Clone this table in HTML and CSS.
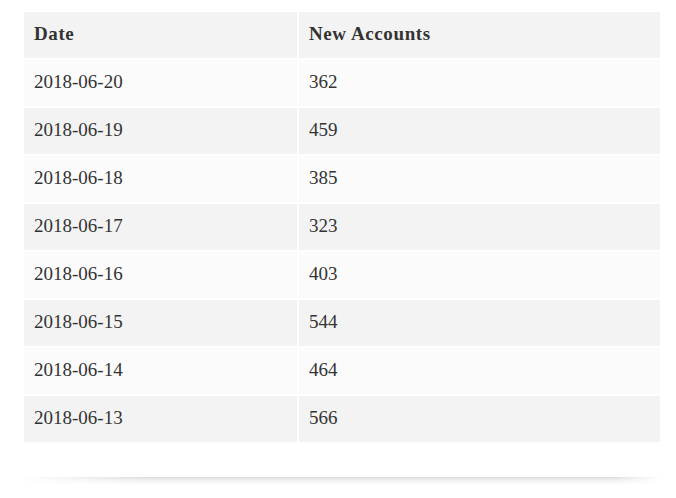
FILE: index.html
```html
<!DOCTYPE html>
<html>
<head>
<meta charset="utf-8">
<link rel="stylesheet" href="styles.css">
</head>
<body>
<div class="card">
  <table class="data">
    <thead>
      <tr><th class="c1">Date</th><th>New Accounts</th></tr>
    </thead>
    <tbody>
      <tr><td>2018-06-20</td><td>362</td></tr>
      <tr><td>2018-06-19</td><td>459</td></tr>
      <tr><td>2018-06-18</td><td>385</td></tr>
      <tr><td>2018-06-17</td><td>323</td></tr>
      <tr><td>2018-06-16</td><td>403</td></tr>
      <tr><td>2018-06-15</td><td>544</td></tr>
      <tr><td>2018-06-14</td><td>464</td></tr>
      <tr><td>2018-06-13</td><td>566</td></tr>
    </tbody>
  </table>
</div>
<div class="shadow"></div>
</body>
</html>
```
FILE: styles.css
```css
html, body {
  margin: 0;
  padding: 0;
  background: #fff;
}
body {
  font-family: "Liberation Serif", "DejaVu Serif", serif;
  color: #333;
}
.card {
  padding: 10px 14px 33px 22px;
}
.data {
  border-collapse: separate;
  border-spacing: 2px;
  width: 640px;
  table-layout: fixed;
}
.data th, .data td {
  height: 46px;
  padding: 0 10px 2px;
  box-sizing: border-box;
  text-align: left;
  font-size: 19px;
  vertical-align: middle;
}
.data th {
  font-weight: bold;
  letter-spacing: 0.6px;
  background: #f3f3f3;
}
.data .c1 {
  width: 273px;
}
.data tbody tr:nth-child(odd) td {
  background: #fbfbfb;
}
.data tbody tr:nth-child(even) td {
  background: #f3f3f3;
}
.shadow {
  margin: 0 14px 0 20px;
  height: 8px;
  background: linear-gradient(to bottom, rgba(0,0,0,0.14), rgba(0,0,0,0.06) 40%, rgba(0,0,0,0));
  -webkit-mask-image: linear-gradient(to right, transparent, #000 20%, #000 92%, transparent);
  mask-image: linear-gradient(to right, transparent, #000 20%, #000 92%, transparent);
}
```
